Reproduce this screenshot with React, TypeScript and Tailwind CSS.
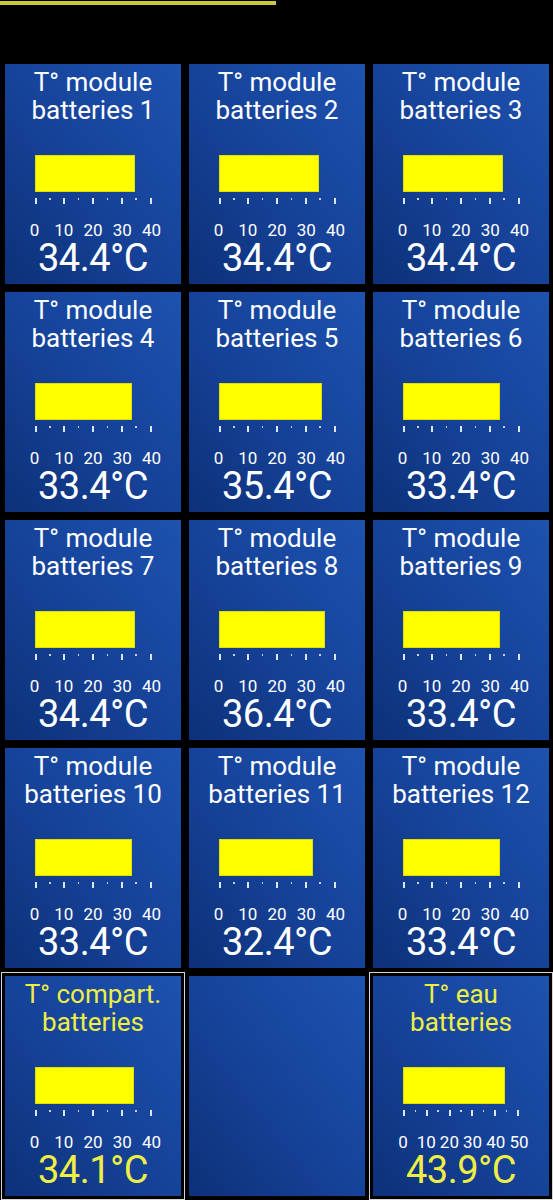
import React from "react";

type CardProps = {
  line1: string;
  line2: string;
  value: number;
  max: number;
  highlight?: boolean;
};

function Gauge({ value, max }: { value: number; max: number }) {
  const track = max === 50 ? 116 : 117;
  const majors = max / 10;
  const tickCount = majors * 2 + 1;
  const step = track / majors;
  const labels = Array.from({ length: majors + 1 }, (_, i) => i * 10);
  return (
    <div className="flex flex-col items-center">
      <div className="mt-[31px]" style={{ width: track }}>
        <div
          className="h-[37px] bg-[#ffff00] border border-[#e0e000]"
          style={{ width: (value / max) * track }}
        />
        <div className="mt-[6px] flex justify-between items-start h-[6px]">
          {Array.from({ length: tickCount }, (_, i) => (
            <div
              key={i}
              className={
                i % 2 === 0
                  ? "w-[2px] h-[6px] bg-[#dfe6f5]"
                  : "w-[1.5px] h-[2.5px] bg-[#c9d3ea]"
              }
            />
          ))}
        </div>
      </div>
      <div
        className="mt-[18.5px] flex justify-center text-[17px] leading-[17px] text-white"
        style={{ width: track + step }}
      >
        {labels.map((l) => (
          <div key={l} className="text-center whitespace-nowrap" style={{ width: step }}>
            {l}
          </div>
        ))}
      </div>
    </div>
  );
}

function Card({ line1, line2, value, max, highlight }: CardProps) {
  const textColor = highlight ? "text-[#eeee44]" : "text-white";
  return (
    <div
      className={
        "h-[220px] bg-gradient-to-bl from-[#1d52b0] via-[#16439a] to-[#0d3179] flex flex-col items-center " +
        (highlight ? "outline-1 outline-solid outline-offset-[3px] outline-[#d6d6d6]" : "")
      }
    >
      <div className={"pt-[4px] text-[26px] leading-[28px] text-center whitespace-nowrap " + textColor}>
        <div>{line1}</div>
        <div>{line2}</div>
      </div>
      <Gauge value={value} max={max} />
      <div className={"mt-[3px] text-[38px] leading-[32px] tracking-[-0.5px] " + textColor}>
        {value.toFixed(1) + "°C"}
      </div>
    </div>
  );
}

const modules = [34.4, 34.4, 34.4, 33.4, 35.4, 33.4, 34.4, 36.4, 33.4, 33.4, 32.4, 33.4];

export default function App() {
  return (
    <div
      className="w-[553px] min-h-[1200px] bg-black"
      style={{ fontFamily: "Roboto, 'Noto Sans', sans-serif" }}
    >
      <div className="pt-[1px]">
        <div className="h-[3.5px] w-[276px] bg-[#c8c93a]" />
      </div>
      <div className="pt-[59px] pl-[5px] pr-[4px] grid grid-cols-3 gap-x-[8px] gap-y-[8px]">
        {modules.map((v, i) => (
          <Card key={i} line1="T° module" line2={`batteries ${i + 1}`} value={v} max={40} />
        ))}
        <Card line1="T° compart." line2="batteries" value={34.1} max={40} highlight />
        <div className="h-[220px] bg-gradient-to-bl from-[#1d52b0] via-[#16439a] to-[#0d3179]" />
        <Card line1="T° eau" line2="batteries" value={43.9} max={50} highlight />
      </div>
    </div>
  );
}
